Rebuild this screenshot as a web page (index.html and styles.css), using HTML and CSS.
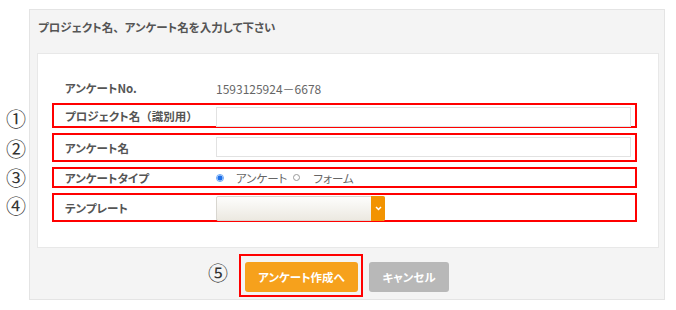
FILE: index.html
```html
<!DOCTYPE html>
<html lang="ja">
<head>
    <meta charset="UTF-8">
    <meta name="viewport" content="width=device-width, initial-scale=1.0">
    <title>アンケート作成</title>
    <link rel="stylesheet" href="styles.css">
</head>
<body>
    <div class="panel">
        <h2 class="panel-title">プロジェクト名<span class="fw">、</span>アンケート名を入力して下さい</h2>

        <div class="panel-body">
            <div class="form-row row-plain">
                <div class="form-label">アンケートNo.</div>
                <div class="form-value">1593125924－6678</div>
            </div>

            <div class="form-row row-1">
                <span class="mark">①</span>
                <label class="form-label" for="project-name">プロジェクト名<span class="fw">（</span>識別用<span class="fw">）</span></label>
                <input type="text" id="project-name" class="form-input">
            </div>

            <div class="form-row row-2">
                <span class="mark">②</span>
                <label class="form-label" for="survey-name">アンケート名</label>
                <input type="text" id="survey-name" class="form-input">
            </div>

            <div class="form-row row-3">
                <span class="mark">③</span>
                <div class="form-label">アンケートタイプ</div>
                <div class="radio-group">
                    <label class="radio-item">
                        <input type="radio" name="survey-type" value="survey" checked>
                        <span>アンケート</span>
                    </label>
                    <label class="radio-item">
                        <input type="radio" name="survey-type" value="form">
                        <span>フォーム</span>
                    </label>
                </div>
            </div>

            <div class="form-row row-4">
                <span class="mark">④</span>
                <label class="form-label" for="template">テンプレート</label>
                <div class="select-wrap">
                    <select id="template" class="form-select">
                        <option value=""></option>
                    </select>
                    <span class="select-arrow">
                        <svg width="7" height="5" viewBox="0 0 7 5">
                            <path d="M1 1 L3.5 3.5 L6 1" fill="none" stroke="#fff" stroke-width="1.5"/>
                        </svg>
                    </span>
                </div>
            </div>
        </div>

        <div class="panel-actions">
            <div class="mark-box">
                <span class="mark mark-5">⑤</span>
                <button type="button" class="btn btn-primary">アンケート作成へ</button>
            </div>
            <button type="button" class="btn btn-cancel">キャンセル</button>
        </div>
    </div>
</body>
</html>
```

FILE: styles.css
```css
* {
    margin: 0;
    padding: 0;
    box-sizing: border-box;
    font-family: 'Noto Sans CJK JP', 'Noto Sans', sans-serif;
    font-feature-settings: "palt";
}

body {
    background-color: #fff;
    color: #555;
}

/* full width punctuation, no proportional spacing */
.fw {
    font-feature-settings: normal;
}

.panel {
    width: 636px;
    height: 291px;
    margin: 9px 0 0 29px;
    background-color: #f4f4f4;
    border: 1px solid #e4e4e4;
}

.panel-title {
    height: 43px;
    padding: 9px 0 0 8px;
    font-size: 11.5px;
    line-height: 16px;
    font-weight: bold;
    color: #555;
}

.panel-body {
    margin: 0 5px 0 7px;
    padding: 24px 21px 25px 14px;
    background-color: #fff;
    border: 1px solid #e8e8e8;
}

.form-row {
    position: relative;
    display: flex;
    align-items: center;
    padding: 0 4px 0 11px;
    border: 2px solid #f00;
    font-size: 11.5px;
}

.form-row + .form-row {
    margin-top: 5px;
}

.row-plain {
    height: 20px;
    border-color: transparent;
    margin-bottom: 1px;
}

.row-1 {
    height: 25px;
}

.row-2,
.row-4 {
    height: 29px;
}

.row-3 {
    height: 21px;
}

.form-label {
    width: 151px;
    flex: none;
    font-weight: bold;
    color: #555;
}

.form-value {
    color: #666;
    font-size: 12px;
}

.form-input {
    flex: 1;
    align-self: flex-start;
    height: 20px;
    margin-top: 2px;
    border: 1px solid #e2e2e2;
    background-color: #fff;
    outline: none;
}

.mark {
    position: absolute;
    left: -48px;
    top: 50%;
    transform: translateY(-50%);
    font-size: 20px;
    line-height: 20px;
    font-weight: normal;
    color: #333;
}

.row-1 .mark {
    margin-top: 3px;
}

.row-2 .mark {
    margin-top: 1px;
}

.row-4 .mark {
    margin-top: -2px;
}

.radio-group {
    display: flex;
    align-items: center;
    color: #666;
}

.radio-item {
    display: flex;
    align-items: center;
}

.radio-item + .radio-item {
    margin-left: 6px;
}

.radio-item input {
    appearance: none;
    width: 8px;
    height: 8px;
    margin-right: 12px;
    border-radius: 50%;
    border: 1px solid #999;
    background-color: #fff;
}

.radio-item input:checked {
    border-color: #6aa8f8;
    background: radial-gradient(circle, #1f6fe8 0, #1f6fe8 2.2px, #cfe2fd 2.8px);
}

.radio-item + .radio-item input {
    width: 7px;
    height: 7px;
    margin-right: 13px;
}

.select-wrap {
    position: relative;
    align-self: flex-start;
    width: 169px;
    height: 25px;
    margin-top: 1px;
}

.form-select {
    appearance: none;
    width: 100%;
    height: 100%;
    border: 1px solid #d8d6d0;
    border-radius: 2px;
    background: linear-gradient(#fdfdfc, #ece9e1);
    outline: none;
}

.select-arrow {
    position: absolute;
    top: 0;
    right: 0;
    width: 14px;
    height: 25px;
    display: flex;
    align-items: center;
    justify-content: center;
    background-color: #f29300;
    border-radius: 0 2px 2px 0;
}

.panel-actions {
    display: flex;
    justify-content: center;
    padding: 6px 6px 0 0;
}

.mark-box {
    position: relative;
    padding: 6px 3px 3px 4px;
    border: 2px solid #f00;
}

.mark-5 {
    left: -33px;
    margin-top: -3px;
}

.btn {
    height: 30px;
    border: none;
    border-radius: 3px;
    color: #fff;
    font-size: 11.5px;
    font-weight: bold;
    cursor: pointer;
}

.btn-primary {
    width: 113px;
    background-color: #f6a11c;
}

.btn-cancel {
    width: 80px;
    margin: 8px 0 0 6px;
    background-color: #b8b8b8;
}
```
